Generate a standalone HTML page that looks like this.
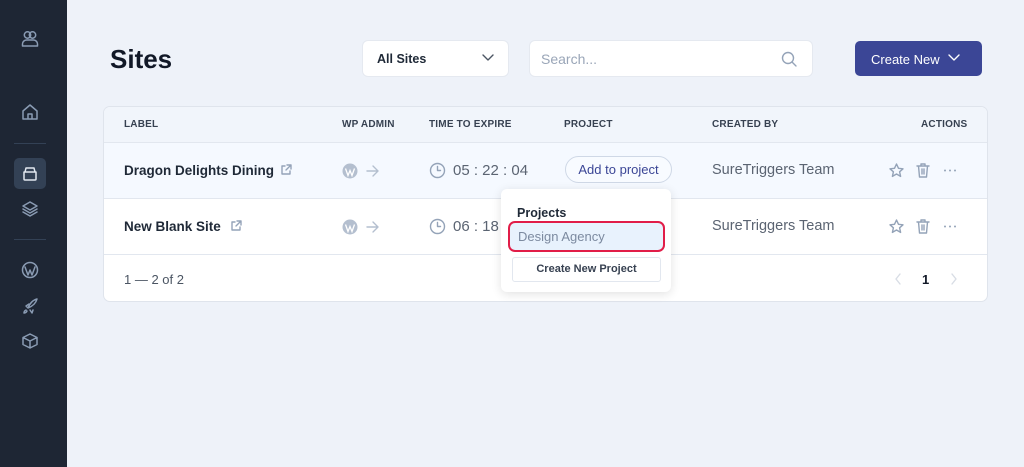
<!DOCTYPE html>
<html><head><style>
*{box-sizing:border-box;margin:0;padding:0}
body{width:1024px;height:467px;background:#eef2f9;font-family:"Liberation Sans",sans-serif;position:relative;overflow:hidden;color:#1f2937}
.sb{position:absolute;left:0;top:0;width:67px;height:467px;background:#1e2634}
.sb svg{position:absolute;left:21px;width:18px;height:18px;fill:none;stroke:#8a9bb3;stroke-width:1.5;stroke-linecap:round;stroke-linejoin:round}
.hr{position:absolute;left:14px;width:32px;height:1px;background:#334155}
.abs{position:absolute}
h1{position:absolute;left:110px;top:44px;font-size:26px;font-weight:bold;color:#111827}
.box{position:absolute;background:#fff;border-radius:5px;box-shadow:0 0 0 1px #e5e9f0}
.card{position:absolute;left:103px;top:106px;width:885px;height:196px;background:#fff;border:1px solid #dfe4ec;border-radius:7px;overflow:hidden}
.th{position:absolute;font-size:10px;font-weight:bold;color:#374151;top:12px;letter-spacing:.2px}
.row{position:absolute;left:0;width:885px;border-top:1px solid #e2e7ef}
.name{position:absolute;left:20px;font-size:13.5px;font-weight:bold;color:#1f2937}
.g{color:#6b7280;font-size:14px;position:absolute}
.ic{position:absolute;fill:none;stroke:#94a3b8;stroke-width:1.4;stroke-linecap:round;stroke-linejoin:round}
</style></head><body>
<div class="sb">
<svg style="top:30px" viewBox="0 0 18 18"><circle cx="6.5" cy="5" r="3.2"/><circle cx="11.5" cy="5" r="3.2"/><path d="M1.5 16v-2a4 4 0 0 1 4-4h7a4 4 0 0 1 4 4v2z"/></svg>
<svg style="top:103px" viewBox="0 0 18 18"><path d="M2 8l7-6 7 6v8H2z M7 16v-5h4v5"/></svg>
<div class="hr" style="top:143px"></div>
<div class="abs" style="left:14px;top:158px;width:32px;height:31px;background:#334155;border-radius:5px"></div>
<svg style="top:165px;stroke:#e2e8f0" viewBox="0 0 18 18"><path d="M3 7h12v7a1 1 0 0 1-1 1H4a1 1 0 0 1-1-1z M4 7l1-4h8l1 4"/></svg>
<svg style="top:200px" viewBox="0 0 18 18"><path d="M9 2l7 4-7 4-7-4z M2 9l7 4 7-4 M2 12l7 4 7-4"/></svg>
<div class="hr" style="top:239px"></div>
<svg style="top:261px" viewBox="0 0 18 18"><circle cx="9" cy="9" r="7.5"/><path d="M4 6l3 8 2-5 2 5 3-8"/></svg>
<svg style="top:297px" viewBox="0 0 18 18"><path d="M7 11c2-5 5-8 9-9-1 4-4 7-9 9z M7 11l-2-2 3-2 M9 13l2 3 1-3 M5 13c-2 1-2 3-2 3s2 0 3-2"/></svg>
<svg style="top:332px" viewBox="0 0 18 18"><path d="M9 2l7 3.5v7L9 16l-7-3.5v-7z M2 5.5L9 9l7-3.5 M9 9v7"/></svg>
</div>
<h1>Sites</h1>
<div class="box" style="left:363px;top:41px;width:145px;height:35px"><span class="abs" style="left:14px;top:11px;font-size:12.5px;font-weight:bold">All Sites</span><svg class="ic" style="left:118px;top:12px;stroke:#4b5563" width="14" height="10" viewBox="0 0 14 10"><path d="M2 2l5 5 5-5"/></svg></div>
<div class="box" style="left:530px;top:41px;width:282px;height:35px"><span class="abs" style="left:11px;top:10px;font-size:14px;color:#9aa6b8">Search...</span><svg class="ic" style="left:250px;top:9px" width="18" height="18" viewBox="0 0 18 18"><circle cx="8" cy="8" r="5.5"/><path d="M12 12l4 4"/></svg></div>
<div class="abs" style="left:855px;top:41px;width:127px;height:35px;background:#3b4696;border-radius:5px;color:#fff;font-size:13px"><span class="abs" style="left:16px;top:11px">Create New</span><svg class="ic" style="left:92px;top:12px;stroke:#fff" width="14" height="10" viewBox="0 0 14 10"><path d="M2 2l5 5 5-5"/></svg></div>
<div class="card">
<div class="abs" style="left:0;top:0;width:885px;height:36px;background:#f1f5fb"></div>
<span class="th" style="left:20px">LABEL</span><span class="th" style="left:238px">WP ADMIN</span><span class="th" style="left:325px">TIME TO EXPIRE</span><span class="th" style="left:460px">PROJECT</span><span class="th" style="left:608px">CREATED BY</span><span class="th" style="left:817px">ACTIONS</span>
<div class="row" style="top:35px;height:56px;background:#f5f9ff">
<span class="name" style="top:20px">Dragon Delights Dining</span>
<svg class="ic" style="left:176px;top:21px" width="12" height="12" viewBox="0 0 12 12"><path d="M5 2H2v8h8V7 M7 1h4v4 M11 1L6 6"/></svg>
<svg style="position:absolute;left:238px;top:20px" width="16" height="16" viewBox="0 0 16 16"><circle cx="8" cy="8" r="7.5" fill="#b4bfcf"/><path d="M3.5 5.5l2.5 7 2-5 2 5 2.5-7" stroke="#fff" stroke-width="1.3" fill="none"/></svg>
<svg class="ic" style="left:262px;top:22px;stroke:#b4bfcf" width="13" height="12" viewBox="0 0 13 12"><path d="M1 6h11 M7 1l5 5-5 5"/></svg>
<svg class="ic" style="left:325px;top:19px" width="17" height="17" viewBox="0 0 17 17"><circle cx="8.5" cy="8.5" r="7"/><path d="M8.5 4.5v4h3"/></svg>
<span class="g" style="left:349px;top:19px;font-size:15px;color:#5b6472">05 : 22 : 04</span>
<div class="abs" style="left:461px;top:13px;width:107px;height:27px;border:1px solid #cfd8e6;border-radius:14px;font-size:13px;color:#3b4696;text-align:center;line-height:25px;background:#f8fbff">Add to project</div>
<span class="g" style="left:608px;top:19px;font-size:14.5px;color:#5b6472">SureTriggers Team</span>
<svg class="ic" style="left:785px;top:20px" width="15" height="15" viewBox="0 0 15 15"><path d="M7.5 1l2 4.3 4.5.5-3.4 3 1 4.6-4.1-2.4-4.1 2.4 1-4.6L1 5.8l4.5-.5z"/></svg>
<svg class="ic" style="left:812px;top:20px" width="14" height="15" viewBox="0 0 14 15"><path d="M1 3h12 M5 3V1h4v2 M2.5 3l1 11h7l1-11 M6 6v5 M8 6v5"/></svg>
<svg style="position:absolute;left:839px;top:26px" width="14" height="3"><circle cx="2" cy="1.5" r="1" fill="#94a3b8"/><circle cx="7" cy="1.5" r="1" fill="#94a3b8"/><circle cx="12" cy="1.5" r="1" fill="#94a3b8"/></svg>
</div>
<div class="row" style="top:91px;height:56px">
<span class="name" style="top:20px">New Blank Site</span>
<svg class="ic" style="left:126px;top:21px" width="12" height="12" viewBox="0 0 12 12"><path d="M5 2H2v8h8V7 M7 1h4v4 M11 1L6 6"/></svg>
<svg style="position:absolute;left:238px;top:20px" width="16" height="16" viewBox="0 0 16 16"><circle cx="8" cy="8" r="7.5" fill="#b4bfcf"/><path d="M3.5 5.5l2.5 7 2-5 2 5 2.5-7" stroke="#fff" stroke-width="1.3" fill="none"/></svg>
<svg class="ic" style="left:262px;top:22px;stroke:#b4bfcf" width="13" height="12" viewBox="0 0 13 12"><path d="M1 6h11 M7 1l5 5-5 5"/></svg>
<svg class="ic" style="left:325px;top:19px" width="17" height="17" viewBox="0 0 17 17"><circle cx="8.5" cy="8.5" r="7"/><path d="M8.5 4.5v4h3"/></svg>
<span class="g" style="left:349px;top:19px;font-size:15px;color:#5b6472">06 : 18 : 5</span>
<span class="g" style="left:608px;top:19px;font-size:14.5px;color:#5b6472">SureTriggers Team</span>
<svg class="ic" style="left:785px;top:20px" width="15" height="15" viewBox="0 0 15 15"><path d="M7.5 1l2 4.3 4.5.5-3.4 3 1 4.6-4.1-2.4-4.1 2.4 1-4.6L1 5.8l4.5-.5z"/></svg>
<svg class="ic" style="left:812px;top:20px" width="14" height="15" viewBox="0 0 14 15"><path d="M1 3h12 M5 3V1h4v2 M2.5 3l1 11h7l1-11 M6 6v5 M8 6v5"/></svg>
<svg style="position:absolute;left:839px;top:26px" width="14" height="3"><circle cx="2" cy="1.5" r="1" fill="#94a3b8"/><circle cx="7" cy="1.5" r="1" fill="#94a3b8"/><circle cx="12" cy="1.5" r="1" fill="#94a3b8"/></svg>
</div>
<div class="row" style="top:147px;height:50px">
<span class="g" style="left:20px;top:17px;font-size:13px;color:#4b5563">1 — 2 of 2</span>
<svg class="ic" style="left:790px;top:18px;stroke:#d8dde5" width="8" height="12" viewBox="0 0 8 12"><path d="M6 1L2 6l4 5"/></svg>
<span class="g" style="left:818px;top:17px;font-size:13px;color:#111827;font-weight:bold">1</span>
<svg class="ic" style="left:846px;top:18px;stroke:#d8dde5" width="8" height="12" viewBox="0 0 8 12"><path d="M2 1l4 5-4 5"/></svg>
</div>
</div>
<div class="abs" style="left:501px;top:189px;width:170px;height:103px;background:#fff;border-radius:6px;box-shadow:0 2px 10px rgba(0,0,0,.12)">
<span class="abs" style="left:16px;top:17px;font-size:12.5px;font-weight:bold;color:#1f2937">Projects</span>
<div class="abs" style="left:7px;top:32px;width:157px;height:31px;border:2px solid #e11d48;border-radius:7px;background:#e8f2fd"><span class="abs" style="left:8px;top:6px;font-size:13px;color:#7c8aa0">Design Agency</span></div>
<div class="abs" style="left:11px;top:68px;width:149px;height:25px;border:1px solid #e2e7ef;border-radius:3px;font-size:11px;font-weight:bold;color:#374151;text-align:center;line-height:23px">Create New Project</div>
</div>
</body></html>
